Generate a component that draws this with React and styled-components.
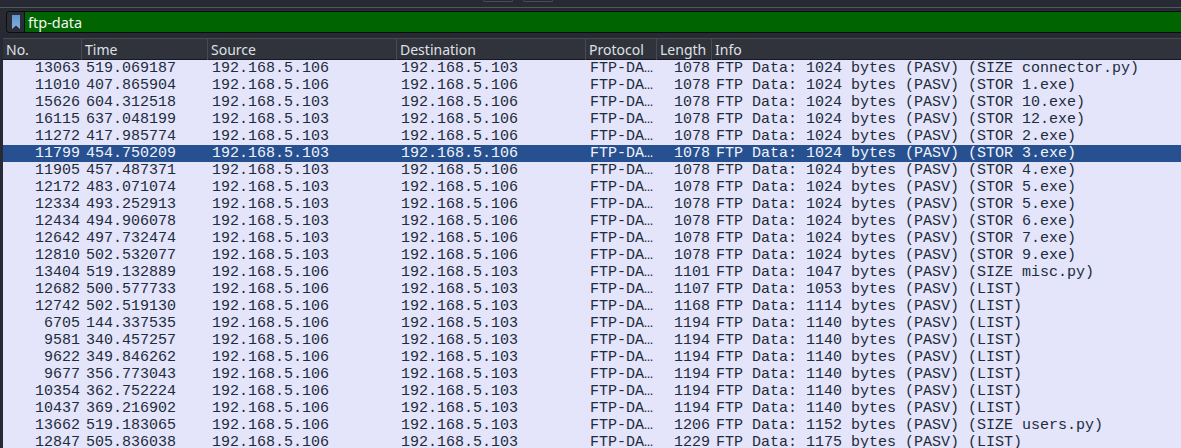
import React from 'react';
import styled, { createGlobalStyle } from 'styled-components';

const GlobalStyle = createGlobalStyle`
  html, body {
    margin: 0;
    padding: 0;
    background: #282a33;
    overflow: hidden;
  }
`;

const packets = [
  ['13063', '519.069187', '192.168.5.106', '192.168.5.103', '1078', 'FTP Data: 1024 bytes (PASV) (SIZE connector.py)'],
  ['11010', '407.865904', '192.168.5.106', '192.168.5.106', '1078', 'FTP Data: 1024 bytes (PASV) (STOR 1.exe)'],
  ['15626', '604.312518', '192.168.5.103', '192.168.5.106', '1078', 'FTP Data: 1024 bytes (PASV) (STOR 10.exe)'],
  ['16115', '637.048199', '192.168.5.103', '192.168.5.106', '1078', 'FTP Data: 1024 bytes (PASV) (STOR 12.exe)'],
  ['11272', '417.985774', '192.168.5.103', '192.168.5.106', '1078', 'FTP Data: 1024 bytes (PASV) (STOR 2.exe)'],
  ['11799', '454.750209', '192.168.5.103', '192.168.5.106', '1078', 'FTP Data: 1024 bytes (PASV) (STOR 3.exe)'],
  ['11905', '457.487371', '192.168.5.103', '192.168.5.106', '1078', 'FTP Data: 1024 bytes (PASV) (STOR 4.exe)'],
  ['12172', '483.071074', '192.168.5.103', '192.168.5.106', '1078', 'FTP Data: 1024 bytes (PASV) (STOR 5.exe)'],
  ['12334', '493.252913', '192.168.5.103', '192.168.5.106', '1078', 'FTP Data: 1024 bytes (PASV) (STOR 5.exe)'],
  ['12434', '494.906078', '192.168.5.103', '192.168.5.106', '1078', 'FTP Data: 1024 bytes (PASV) (STOR 6.exe)'],
  ['12642', '497.732474', '192.168.5.103', '192.168.5.106', '1078', 'FTP Data: 1024 bytes (PASV) (STOR 7.exe)'],
  ['12810', '502.532077', '192.168.5.103', '192.168.5.106', '1078', 'FTP Data: 1024 bytes (PASV) (STOR 9.exe)'],
  ['13404', '519.132889', '192.168.5.106', '192.168.5.103', '1101', 'FTP Data: 1047 bytes (PASV) (SIZE misc.py)'],
  ['12682', '500.577733', '192.168.5.106', '192.168.5.103', '1107', 'FTP Data: 1053 bytes (PASV) (LIST)'],
  ['12742', '502.519130', '192.168.5.106', '192.168.5.103', '1168', 'FTP Data: 1114 bytes (PASV) (LIST)'],
  ['6705', '144.337535', '192.168.5.106', '192.168.5.103', '1194', 'FTP Data: 1140 bytes (PASV) (LIST)'],
  ['9581', '340.457257', '192.168.5.106', '192.168.5.103', '1194', 'FTP Data: 1140 bytes (PASV) (LIST)'],
  ['9622', '349.846262', '192.168.5.106', '192.168.5.103', '1194', 'FTP Data: 1140 bytes (PASV) (LIST)'],
  ['9677', '356.773043', '192.168.5.106', '192.168.5.103', '1194', 'FTP Data: 1140 bytes (PASV) (LIST)'],
  ['10354', '362.752224', '192.168.5.106', '192.168.5.103', '1194', 'FTP Data: 1140 bytes (PASV) (LIST)'],
  ['10437', '369.216902', '192.168.5.106', '192.168.5.103', '1194', 'FTP Data: 1140 bytes (PASV) (LIST)'],
  ['13662', '519.183065', '192.168.5.106', '192.168.5.103', '1206', 'FTP Data: 1152 bytes (PASV) (SIZE users.py)'],
  ['12847', '505.836038', '192.168.5.106', '192.168.5.103', '1229', 'FTP Data: 1175 bytes (PASV) (LIST)'],
];

const SELECTED = '11799';
const columns = '79px 126px 189px 189px 71px 55px 1fr';

const Window = styled.div`
  width: 1181px;
  height: 448px;
  overflow: hidden;
  display: flex;
  flex-direction: column;
  background: #282a33;
`;

const Toolbar = styled.div`
  height: 7px;
  flex: none;
  display: flex;
  gap: 10px;
  padding-left: 483px;
  border-bottom: 1px solid #55575f;
`;

const ToolButton = styled.div`
  width: 28px;
  height: 1px;
  border: 1px solid #4a4c55;
  border-top: none;
  border-radius: 0 0 3px 3px;
`;

const FilterBar = styled.div`
  height: 22px;
  box-sizing: border-box;
  flex: none;
  margin: 3px 0 5px 6px;
  display: flex;
  background: #006400;
  border: 1px solid #0c0d11;
  border-right: none;
  border-radius: 4px 0 0 4px;
`;

const BookmarkBox = styled.div`
  width: 17px;
  flex: none;
  display: flex;
  align-items: center;
  justify-content: center;
  background: #2b2d36;
  border-right: 1px solid #0c0d11;
  border-radius: 3px 0 0 3px;
`;

const FilterText = styled.div`
  padding-left: 3px;
  font: 14.5px/20px "Noto Sans", sans-serif;
  color: #f2f5f2;
`;

const Table = styled.div`
  flex: 1;
  margin-left: 3px;
  display: flex;
  flex-direction: column;
`;

const HeaderRow = styled.div`
  height: 22px;
  flex: none;
  display: grid;
  grid-template-columns: ${columns};
  background: #31333c;
  border-top: 1px solid #484a53;
  box-sizing: border-box;
  border-bottom: 1px solid #17181d;
`;

const HeaderCell = styled.div`
  padding-left: 3px;
  border-right: 1px solid #484a53;
  font: 14px/21px "Noto Sans", sans-serif;
  color: #dfe1e6;
  &:last-child {
    border-right: none;
  }
`;

const Row = styled.div`
  height: 17px;
  flex: none;
  display: grid;
  grid-template-columns: ${columns};
  font: 15px/17px "Liberation Mono", monospace;
  white-space: nowrap;
  background: ${(p) => (p.$selected ? '#26508f' : '#e4e4fb')};
  color: ${(p) => (p.$selected ? '#f2f3fa' : '#1d2c3a')};
`;

const Cell = styled.div`
  padding: 0 ${(p) => (p.$right ? '2px' : '0')} 0 ${(p) => (p.$right ? '0' : '4px')};
  text-align: ${(p) => (p.$right ? 'right' : 'left')};
  overflow: hidden;
`;

const Bookmark = () => (
  <svg width="8" height="14" viewBox="0 0 8 14">
    <defs>
      <linearGradient id="bookmarkFill" x1="0" y1="0" x2="0" y2="1">
        <stop offset="0" stopColor="#5f93cd" />
        <stop offset="1" stopColor="#86b0dd" />
      </linearGradient>
    </defs>
    <path d="M0 0h8v14l-4-3.5l-4 3.5z" fill="url(#bookmarkFill)" />
  </svg>
);

export default function App() {
  return (
    <Window>
      <GlobalStyle />
      <Toolbar>
        <ToolButton />
        <ToolButton />
      </Toolbar>
      <FilterBar>
        <BookmarkBox>
          <Bookmark />
        </BookmarkBox>
        <FilterText>ftp-data</FilterText>
      </FilterBar>
      <Table>
        <HeaderRow>
          <HeaderCell>No.</HeaderCell>
          <HeaderCell>Time</HeaderCell>
          <HeaderCell>Source</HeaderCell>
          <HeaderCell>Destination</HeaderCell>
          <HeaderCell>Protocol</HeaderCell>
          <HeaderCell>Length</HeaderCell>
          <HeaderCell>Info</HeaderCell>
        </HeaderRow>
        {packets.map((p) => (
          <Row key={p[0]} $selected={p[0] === SELECTED}>
            <Cell $right>{p[0]}</Cell>
            <Cell>{p[1]}</Cell>
            <Cell>{p[2]}</Cell>
            <Cell>{p[3]}</Cell>
            <Cell>FTP-DA…</Cell>
            <Cell $right>{p[4]}</Cell>
            <Cell>{p[5]}</Cell>
          </Row>
        ))}
      </Table>
    </Window>
  );
}
